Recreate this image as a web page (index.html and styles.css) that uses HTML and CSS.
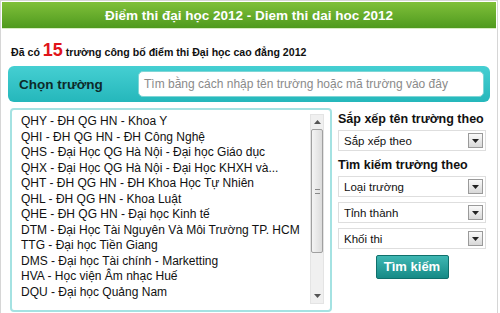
FILE: index.html
```html
<!DOCTYPE html>
<html>
<head>
<meta charset="utf-8">
<link rel="stylesheet" href="styles.css">
</head>
<body>
<div class="wrap">
  <div class="header">Điểm thi đại học 2012 - Diem thi dai hoc 2012</div>
  <div class="info">Đã có <span class="num">15</span> trường công bố điểm thi Đại học cao đẳng 2012</div>
  <div class="searchbar">
    <div class="label">Chọn trường</div>
    <div class="input">Tìm bằng cách nhập tên trường hoặc mã trường vào đây</div>
  </div>
  <div class="main">
    <div class="listbox">
      <ul class="items">
        <li>QHY - ĐH QG HN - Khoa Y</li>
        <li>QHI - ĐH QG HN - ĐH Công Nghệ</li>
        <li>QHS - Đại Học QG Hà Nội - Đại học Giáo dục</li>
        <li>QHX - Đại Học QG Hà Nội - Đại Học KHXH và...</li>
        <li>QHT - ĐH QG HN - ĐH Khoa Học Tự Nhiên</li>
        <li>QHL - ĐH QG HN - Khoa Luật</li>
        <li>QHE - ĐH QG HN - Đại học Kinh tế</li>
        <li>DTM - Đại Học Tài Nguyên Và Môi Trường TP. HCM</li>
        <li>TTG - Đại học Tiền Giang</li>
        <li>DMS - Đại học Tài chính - Marketting</li>
        <li>HVA - Học viện Âm nhạc Huế</li>
        <li>DQU - Đại học Quảng Nam</li>
      </ul>
      <div class="scrollbar">
        <div class="arrow"><svg width="7" height="4" viewBox="0 0 7 4"><path d="M0 4L3.5 0L7 4Z" fill="#555"/></svg></div>
        <div class="thumb"><span class="grip"></span></div>
        <div class="track"></div>
        <div class="arrow"><svg width="7" height="4" viewBox="0 0 7 4"><path d="M0 0L3.5 4L7 0Z" fill="#555"/></svg></div>
      </div>
    </div>
    <div class="side">
      <div class="title">Sắp xếp tên trường theo</div>
      <div class="select"><span>Sắp xếp theo</span><span class="btn"><svg width="7" height="4" viewBox="0 0 7 4"><path d="M0 0L3.5 4L7 0Z" fill="#222"/></svg></span></div>
      <div class="title t2">Tìm kiếm trường theo</div>
      <div class="select"><span>Loại trường</span><span class="btn"><svg width="7" height="4" viewBox="0 0 7 4"><path d="M0 0L3.5 4L7 0Z" fill="#222"/></svg></span></div>
      <div class="select"><span>Tỉnh thành</span><span class="btn"><svg width="7" height="4" viewBox="0 0 7 4"><path d="M0 0L3.5 4L7 0Z" fill="#222"/></svg></span></div>
      <div class="select"><span>Khối thi</span><span class="btn"><svg width="7" height="4" viewBox="0 0 7 4"><path d="M0 0L3.5 4L7 0Z" fill="#222"/></svg></span></div>
      <div class="btnrow"><div class="go">Tìm kiếm</div></div>
    </div>
  </div>
</div>
</body>
</html>
```
FILE: styles.css
```css
* { box-sizing: border-box; }
body {
  margin: 0;
  background: #fff;
  font-family: "Liberation Sans", Arial, sans-serif;
  color: #111;
}
.wrap {
  width: 498px;
  height: 316px;
  border: 1px solid #d6d6d6;
  border-bottom: none;
  padding: 1px;
}
.header {
  height: 27px;
  background: linear-gradient(#80c03a, #4f9a1e);
  color: #fff;
  font-weight: bold;
  font-size: 13.5px;
  text-align: center;
  line-height: 27px;
  border-bottom: 1px solid #d8ecc4;
}
.info {
  margin-top: 11px;
  padding-left: 9px;
  font-size: 10.6px;
  font-weight: bold;
  height: 20px;
  line-height: 20px;
}
.num {
  color: #e0141a;
  font-size: 18px;
}
.searchbar {
  margin: 6px 6px 0 6px;
  height: 36px;
  border-radius: 6px;
  background: linear-gradient(#45cfd2, #25b7bb);
  display: flex;
  align-items: center;
  padding: 0 6px 0 11px;
}
.label {
  width: 119px;
  font-size: 13.5px;
  font-weight: bold;
  color: #0d2a2a;
}
.input {
  flex: 1;
  height: 26px;
  background: #fff;
  border-radius: 5px;
  border: 1px solid #7fd6d6;
  font-size: 12px;
  color: #8a8a8a;
  line-height: 24px;
  padding-left: 5px;
  white-space: nowrap;
  overflow: hidden;
}
.main {
  display: flex;
  margin-top: 6px;
  padding-left: 8px;
}
.listbox {
  width: 322px;
  height: 204px;
  border: 2px solid #a4e2e2;
  border-radius: 4px;
  display: flex;
  padding: 4px 6px 6px 9px;
}
.items {
  list-style: none;
  margin: 0;
  padding: 0;
  flex: 1;
}
.items li {
  font-size: 12px;
  height: 15.5px;
  line-height: 15.5px;
  white-space: nowrap;
}
.scrollbar {
  width: 14px;
  display: flex;
  flex-direction: column;
  background: #f0f0f0;
  border: 1px solid #e4e4e4;
  margin-left: 1px;
}
.arrow {
  height: 14px;
  display: flex;
  align-items: center;
  justify-content: center;
}
.thumb {
  height: 124px;
  background: linear-gradient(90deg, #f4f4f4, #dcdcdc);
  border: 1px solid #a0a0a0;
  border-radius: 2px;
  display: flex;
  align-items: center;
  justify-content: center;
}
.grip {
  width: 5px;
  height: 5px;
  border-top: 1px solid #888;
  border-bottom: 1px solid #888;
}
.track { flex: 1; }
.side {
  width: 148px;
  margin-left: 6px;
  padding-top: 3px;
}
.title {
  font-size: 12.5px;
  font-weight: bold;
  height: 16px;
  line-height: 16px;
  margin-bottom: 3px;
}
.t2 { margin-top: 6px; margin-bottom: 3px; }
.select {
  height: 21px;
  border: 1px solid #dedede;
  display: flex;
  align-items: center;
  justify-content: space-between;
  padding: 0 2px 0 5px;
  font-size: 11.5px;
  color: #111;
  margin-bottom: 5px;
}
.btn {
  width: 15px;
  height: 15px;
  border: 1px solid #9a9a9a;
  background: linear-gradient(#fafafa, #d8d8d8);
  display: flex;
  align-items: center;
  justify-content: center;
}
.btnrow {
  display: flex;
  justify-content: center;
  padding-top: 1px;
}
.go {
  width: 73px;
  height: 24px;
  background: linear-gradient(#3fb7b3, #168a86);
  border: 1px solid #10706c;
  border-radius: 2px;
  color: #fff;
  font-weight: bold;
  font-size: 13px;
  text-align: center;
  line-height: 22px;
}
```
